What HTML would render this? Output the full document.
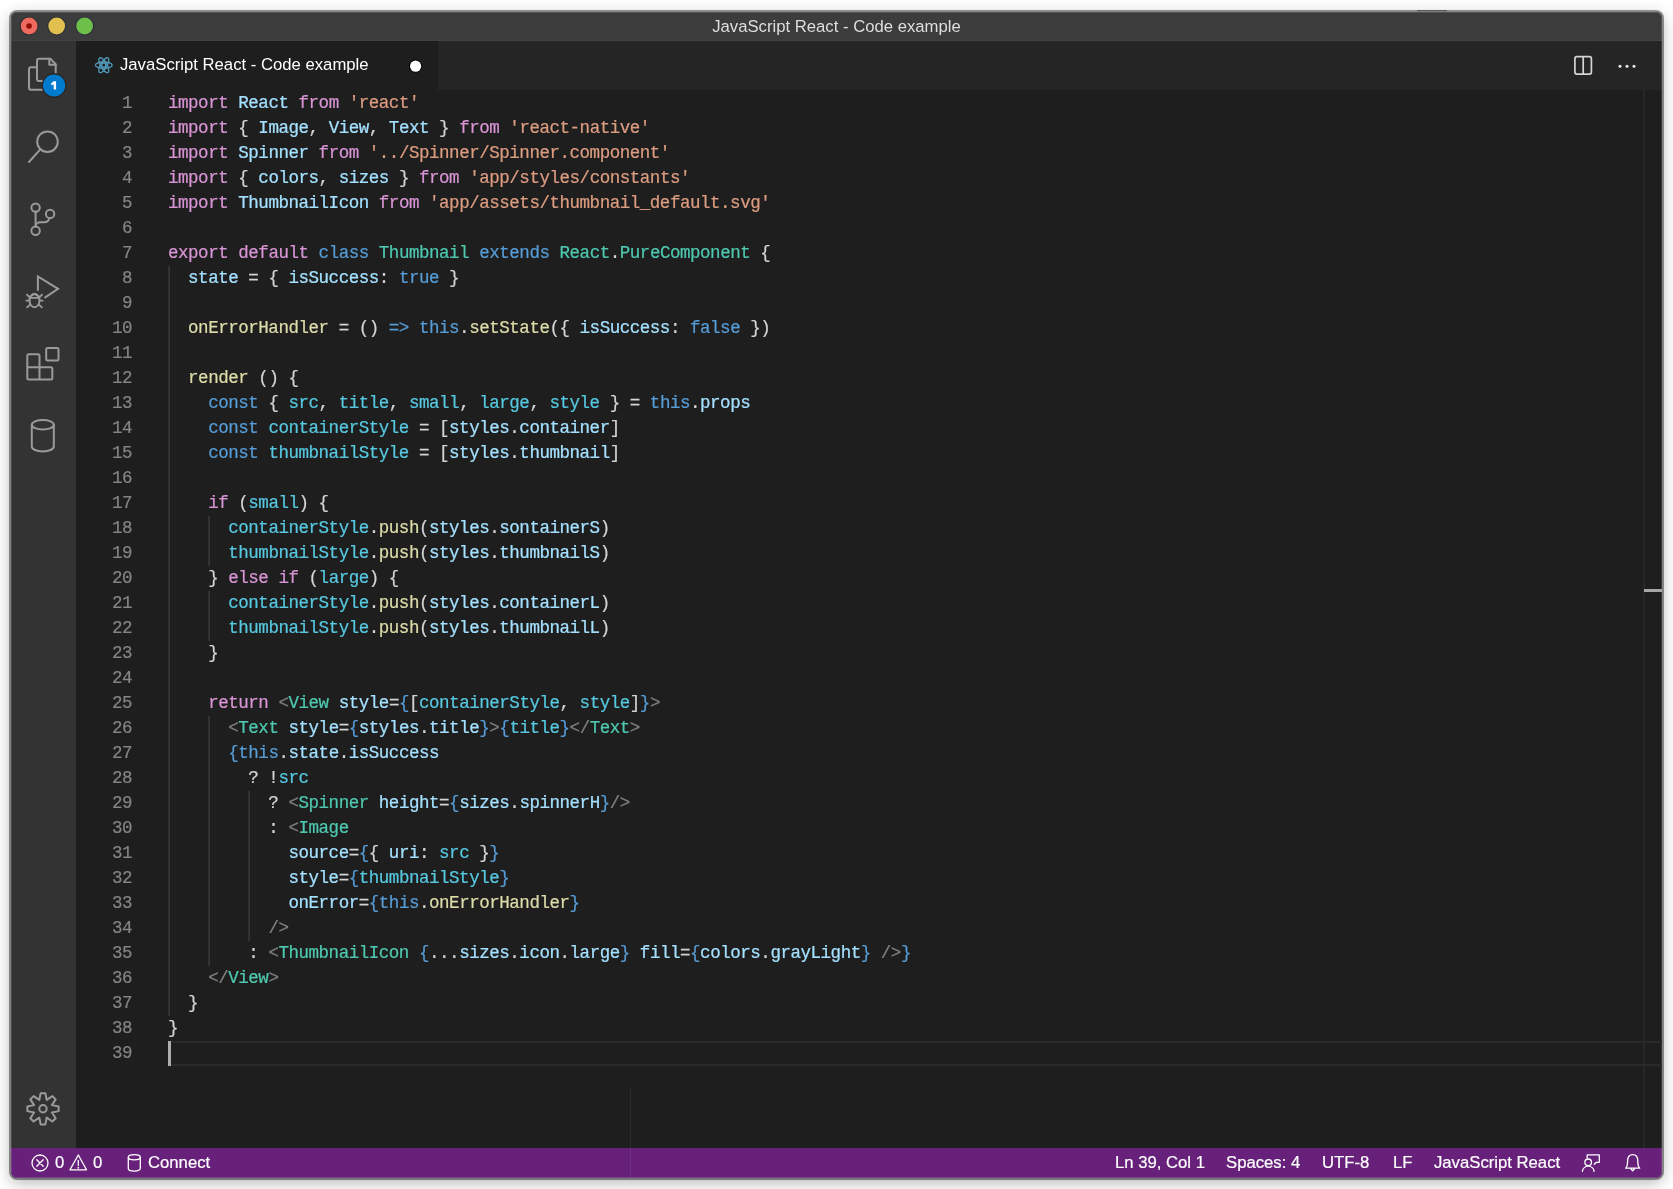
<!DOCTYPE html>
<html><head><meta charset="utf-8">
<style>
*{box-sizing:border-box}
html,body{margin:0;padding:0}
body{width:1673px;height:1189px;background:#ffffff;position:relative;overflow:hidden;font-family:"Liberation Sans",sans-serif}
#win{position:absolute;left:11px;top:12px;width:1651px;height:1166px;border-radius:6px;overflow:hidden;background:#1e1e1e;
 box-shadow:0 0 0 2px rgba(0,0,0,0.4),0 4px 16px rgba(0,0,0,0.32)}
#title{will-change:transform;position:absolute;left:0;top:0;width:1651px;height:29px;background:#3c3c3c;box-shadow:inset 0 -1px 0 #424242;color:#dedede;font-size:16.7px;text-align:center;line-height:29px}
.tl{position:absolute;top:5.5px;width:17px;height:17px;border-radius:50%}
#act{position:absolute;left:0;top:29px;width:65px;height:1107px;background:#333333}
#tabs{position:absolute;left:65px;top:29px;right:0;height:49px;background:#252526}
#tab{position:absolute;left:0;top:0;width:362px;height:49px;background:#1e1e1e}
#tabtxt{will-change:transform;position:absolute;left:44px;top:0;line-height:47px;font-size:16.7px;color:#ffffff;white-space:pre}
#editor{position:absolute;left:65px;top:78px;right:0;height:1059px;background:#1e1e1e}
#code{position:absolute;left:157px;top:78.5px;will-change:transform;-webkit-text-stroke:0.22px currentColor;font-family:"Liberation Mono",monospace;font-size:17.5px;letter-spacing:-0.465px;color:#d4d4d4}
.ln{position:absolute;left:0;height:25px;line-height:25px;white-space:pre}
#nums{will-change:transform;-webkit-text-stroke:0.2px currentColor;position:absolute;left:60px;top:79px;width:61px;font-family:"Liberation Mono",monospace;font-size:17.5px;letter-spacing:-0.5px;color:#858585}
.nu{position:absolute;right:0;height:25px;line-height:25px;white-space:pre}
.k{color:#d894d4}.s{color:#569cd6}.v{color:#a4e0ff}.c{color:#56c8e0}.t{color:#4ec9b0}.f{color:#dcdcaa}.r{color:#dc9c80}.g{color:#808080}
.guide{position:absolute;width:1px;background:#404040}
#status{will-change:transform;-webkit-text-stroke:0.2px #fff;position:absolute;left:0;top:1136px;width:1651px;height:30px;background:#68217a;color:#ffffff;font-size:16.7px}
.st{position:absolute;top:0;line-height:30px;white-space:pre}
svg{position:absolute;overflow:visible}
</style></head><body>
<div id="win">
 <div id="title">JavaScript React - Code example</div>
 <div class="tl" style="left:9.5px;background:#fe5f57"></div>
 <div class="tl" style="left:37px;background:#febc2e"></div>
 <div class="tl" style="left:65px;background:#28c840"></div>
 <div id="act"></div>
 <div id="tabs"><div id="tab"><div id="tabtxt">JavaScript React - Code example</div></div></div>
 <div id="editor"></div>
 <div id="nums">
<div class="nu" style="top:0px">1</div>
<div class="nu" style="top:25px">2</div>
<div class="nu" style="top:50px">3</div>
<div class="nu" style="top:75px">4</div>
<div class="nu" style="top:100px">5</div>
<div class="nu" style="top:125px">6</div>
<div class="nu" style="top:150px">7</div>
<div class="nu" style="top:175px">8</div>
<div class="nu" style="top:200px">9</div>
<div class="nu" style="top:225px">10</div>
<div class="nu" style="top:250px">11</div>
<div class="nu" style="top:275px">12</div>
<div class="nu" style="top:300px">13</div>
<div class="nu" style="top:325px">14</div>
<div class="nu" style="top:350px">15</div>
<div class="nu" style="top:375px">16</div>
<div class="nu" style="top:400px">17</div>
<div class="nu" style="top:425px">18</div>
<div class="nu" style="top:450px">19</div>
<div class="nu" style="top:475px">20</div>
<div class="nu" style="top:500px">21</div>
<div class="nu" style="top:525px">22</div>
<div class="nu" style="top:550px">23</div>
<div class="nu" style="top:575px">24</div>
<div class="nu" style="top:600px">25</div>
<div class="nu" style="top:625px">26</div>
<div class="nu" style="top:650px">27</div>
<div class="nu" style="top:675px">28</div>
<div class="nu" style="top:700px">29</div>
<div class="nu" style="top:725px">30</div>
<div class="nu" style="top:750px">31</div>
<div class="nu" style="top:775px">32</div>
<div class="nu" style="top:800px">33</div>
<div class="nu" style="top:825px">34</div>
<div class="nu" style="top:850px">35</div>
<div class="nu" style="top:875px">36</div>
<div class="nu" style="top:900px">37</div>
<div class="nu" style="top:925px">38</div>
<div class="nu" style="top:950px">39</div>
 </div>
 <div id="code">
<div class="ln" style="top:0px"><span class="k">import</span> <span class="v">React</span> <span class="k">from</span> <span class="r">'react'</span></div>
<div class="ln" style="top:25px"><span class="k">import</span> { <span class="v">Image</span>, <span class="v">View</span>, <span class="v">Text</span> } <span class="k">from</span> <span class="r">'react-native'</span></div>
<div class="ln" style="top:50px"><span class="k">import</span> <span class="v">Spinner</span> <span class="k">from</span> <span class="r">'../Spinner/Spinner.component'</span></div>
<div class="ln" style="top:75px"><span class="k">import</span> { <span class="v">colors</span>, <span class="v">sizes</span> } <span class="k">from</span> <span class="r">'app/styles/constants'</span></div>
<div class="ln" style="top:100px"><span class="k">import</span> <span class="v">ThumbnailIcon</span> <span class="k">from</span> <span class="r">'app/assets/thumbnail_default.svg'</span></div>
<div class="ln" style="top:125px"></div>
<div class="ln" style="top:150px"><span class="k">export</span> <span class="k">default</span> <span class="s">class</span> <span class="t">Thumbnail</span> <span class="s">extends</span> <span class="t">React</span>.<span class="t">PureComponent</span> {</div>
<div class="ln" style="top:175px">  <span class="v">state</span> = { <span class="v">isSuccess</span>: <span class="s">true</span> }</div>
<div class="ln" style="top:200px"></div>
<div class="ln" style="top:225px">  <span class="f">onErrorHandler</span> = () <span class="s">=&gt;</span> <span class="s">this</span>.<span class="f">setState</span>({ <span class="v">isSuccess</span>: <span class="s">false</span> })</div>
<div class="ln" style="top:250px"></div>
<div class="ln" style="top:275px">  <span class="f">render</span> () {</div>
<div class="ln" style="top:300px">    <span class="s">const</span> { <span class="c">src</span>, <span class="c">title</span>, <span class="c">small</span>, <span class="c">large</span>, <span class="c">style</span> } = <span class="s">this</span>.<span class="v">props</span></div>
<div class="ln" style="top:325px">    <span class="s">const</span> <span class="c">containerStyle</span> = [<span class="v">styles</span>.<span class="v">container</span>]</div>
<div class="ln" style="top:350px">    <span class="s">const</span> <span class="c">thumbnailStyle</span> = [<span class="v">styles</span>.<span class="v">thumbnail</span>]</div>
<div class="ln" style="top:375px"></div>
<div class="ln" style="top:400px">    <span class="k">if</span> (<span class="c">small</span>) {</div>
<div class="ln" style="top:425px">      <span class="c">containerStyle</span>.<span class="f">push</span>(<span class="v">styles</span>.<span class="v">sontainerS</span>)</div>
<div class="ln" style="top:450px">      <span class="c">thumbnailStyle</span>.<span class="f">push</span>(<span class="v">styles</span>.<span class="v">thumbnailS</span>)</div>
<div class="ln" style="top:475px">    } <span class="k">else</span> <span class="k">if</span> (<span class="c">large</span>) {</div>
<div class="ln" style="top:500px">      <span class="c">containerStyle</span>.<span class="f">push</span>(<span class="v">styles</span>.<span class="v">containerL</span>)</div>
<div class="ln" style="top:525px">      <span class="c">thumbnailStyle</span>.<span class="f">push</span>(<span class="v">styles</span>.<span class="v">thumbnailL</span>)</div>
<div class="ln" style="top:550px">    }</div>
<div class="ln" style="top:575px"></div>
<div class="ln" style="top:600px">    <span class="k">return</span> <span class="g">&lt;</span><span class="t">View</span> <span class="v">style</span>=<span class="s">{</span>[<span class="c">containerStyle</span>, <span class="c">style</span>]<span class="s">}</span><span class="g">&gt;</span></div>
<div class="ln" style="top:625px">      <span class="g">&lt;</span><span class="t">Text</span> <span class="v">style</span>=<span class="s">{</span><span class="v">styles</span>.<span class="v">title</span><span class="s">}</span><span class="g">&gt;</span><span class="s">{</span><span class="c">title</span><span class="s">}</span><span class="g">&lt;/</span><span class="t">Text</span><span class="g">&gt;</span></div>
<div class="ln" style="top:650px">      <span class="s">{</span><span class="s">this</span>.<span class="v">state</span>.<span class="v">isSuccess</span></div>
<div class="ln" style="top:675px">        ? !<span class="c">src</span></div>
<div class="ln" style="top:700px">          ? <span class="g">&lt;</span><span class="t">Spinner</span> <span class="v">height</span>=<span class="s">{</span><span class="v">sizes</span>.<span class="v">spinnerH</span><span class="s">}</span><span class="g">/&gt;</span></div>
<div class="ln" style="top:725px">          : <span class="g">&lt;</span><span class="t">Image</span></div>
<div class="ln" style="top:750px">            <span class="v">source</span>=<span class="s">{</span>{ <span class="v">uri</span>: <span class="c">src</span> }<span class="s">}</span></div>
<div class="ln" style="top:775px">            <span class="v">style</span>=<span class="s">{</span><span class="c">thumbnailStyle</span><span class="s">}</span></div>
<div class="ln" style="top:800px">            <span class="v">onError</span>=<span class="s">{</span><span class="s">this</span>.<span class="f">onErrorHandler</span><span class="s">}</span></div>
<div class="ln" style="top:825px">          <span class="g">/&gt;</span></div>
<div class="ln" style="top:850px">        : <span class="g">&lt;</span><span class="t">ThumbnailIcon</span> <span class="s">{</span>...<span class="v">sizes</span>.<span class="v">icon</span>.<span class="v">large</span><span class="s">}</span> <span class="v">fill</span>=<span class="s">{</span><span class="v">colors</span>.<span class="v">grayLight</span><span class="s">}</span> <span class="g">/&gt;</span><span class="s">}</span></div>
<div class="ln" style="top:875px">    <span class="g">&lt;/</span><span class="t">View</span><span class="g">&gt;</span></div>
<div class="ln" style="top:900px">  }</div>
<div class="ln" style="top:925px">}</div>
<div class="ln" style="top:950px"></div>
 </div>
 <div id="status">
  <div class="st" style="left:44px">0</div>
  <div class="st" style="left:82px">0</div>
  <div class="st" style="left:137px">Connect</div>
  <div class="st" style="left:1104px">Ln 39, Col 1</div>
  <div class="st" style="left:1215px">Spaces: 4</div>
  <div class="st" style="left:1311px">UTF-8</div>
  <div class="st" style="left:1382px">LF</div>
  <div class="st" style="left:1423px">JavaScript React</div>
 </div>
</div>

<div style="position:absolute;left:11px;top:12px;width:1651px;height:1166px;border-radius:6px;border:1px solid rgba(255,255,255,0.12)"></div>
<svg id="ov" width="1673" height="1189" style="left:0;top:0">
 <g fill="none" stroke="#9a9a9a" stroke-width="2" stroke-linejoin="round" stroke-linecap="round">
  <!-- files -->
  <path d="M37 74 V60.8 Q37 58.8 39 58.8 H50.3 L55.7 64.3 V78" />
  <path d="M49.3 58.8 V64.8 H55.7" />
  <path d="M37 67.2 H31 Q29 67.2 29 69.2 V87.7 Q29 89.7 31 89.7 H44" />
  <path d="M37 74 V79.1 Q37 81.1 39 81.1 H44" />
  <!-- search -->
  <circle cx="47.5" cy="141.7" r="10.3"/>
  <path d="M29 162 L39.8 149.9"/>
  <!-- scm -->
  <circle cx="35.6" cy="207.6" r="4.2"/>
  <circle cx="35.6" cy="230.7" r="4.2"/>
  <circle cx="50.1" cy="213.9" r="4.2"/>
  <path d="M35.6 211.8 V226.5"/>
  <path d="M49.6 218.1 C48.8 221.2 46.5 222.3 44 222.3 H40.5 C37.8 222.3 35.6 224 35.6 226.5"/>
  <!-- debug -->
  <path d="M37.9 289.9 V276.5 L58.1 288.8 L45.2 297.4" stroke-linejoin="miter"/>
  <ellipse cx="34.5" cy="300.6" rx="5" ry="6.6"/>
  <path d="M29.5 297.8 H39.5 M31.5 295.8 Q34.5 292.2 37.5 295.8 M26.9 294.7 L29.6 297 M26.3 300.6 H29.3 M27.1 307.3 L29.7 305 M42.1 294.7 L39.4 297 M42.7 300.6 H39.7 M41.9 307.3 L39.3 305" stroke-width="1.8"/>
  <!-- extensions -->
  <rect x="46.2" y="348" width="12.3" height="12.5" rx="1.5"/>
  <path d="M27.3 355.8 Q27.3 354.3 28.8 354.3 H38 Q39.5 354.3 39.5 355.8 V367.2 H50.8 Q52.3 367.2 52.3 368.7 V377.9 Q52.3 379.4 50.8 379.4 H28.8 Q27.3 379.4 27.3 377.9 Z M27.3 367.2 H39.5 V379.4"/>
  <!-- db -->
  <ellipse cx="42.8" cy="424.8" rx="11" ry="4.8"/>
  <path d="M31.8 424.8 V446.6 A11 4.8 0 0 0 53.8 446.6 V424.8"/>
  <!-- gear -->
  <path d="M40.66 1093.17 L45.34 1093.17 L46.67 1099.93 L52.40 1096.10 L55.70 1099.40 L51.87 1105.13 L58.63 1106.46 L58.63 1111.14 L51.87 1112.47 L55.70 1118.20 L52.40 1121.50 L46.67 1117.67 L45.34 1124.43 L40.66 1124.43 L39.33 1117.67 L33.60 1121.50 L30.30 1118.20 L34.13 1112.47 L27.37 1111.14 L27.37 1106.46 L34.13 1105.13 L30.30 1099.40 L33.60 1096.10 L39.33 1099.93Z"/>
  <circle cx="43" cy="1108.8" r="3.7"/>
 </g>
 <!-- badge -->
 <circle cx="54.1" cy="85.5" r="12.4" fill="#2a2624"/>
 <circle cx="54.1" cy="85.5" r="11.1" fill="#007acc"/>
 <path d="M53.7 81.2 H56.1 V89.6 H53.7 V84.3 L51.3 85.5 V83.3 Z" fill="#ffffff"/>
 <!-- traffic lights -->
 <circle cx="29.1" cy="26" r="9.3" fill="#23292b"/>
 <circle cx="29.1" cy="26" r="8.4" fill="#ee6a5e"/>
 <circle cx="29.1" cy="26" r="2.8" fill="#8d0e05"/>
 <circle cx="56.7" cy="26" r="9.3" fill="#26283a"/>
 <circle cx="56.7" cy="26" r="8.4" fill="#e2c04f"/>
 <circle cx="84.6" cy="26" r="9.3" fill="#2a2440"/>
 <circle cx="84.6" cy="26" r="8.4" fill="#6cc04a"/>
 <!-- react icon -->
 <g fill="none" stroke="#519aba" stroke-width="1.3">
  <ellipse cx="103.8" cy="65.2" rx="8.4" ry="3.2"/>
  <ellipse cx="103.8" cy="65.2" rx="8.4" ry="3.2" transform="rotate(60 103.8 65.2)"/>
  <ellipse cx="103.8" cy="65.2" rx="8.4" ry="3.2" transform="rotate(120 103.8 65.2)"/>
  <circle cx="103.8" cy="65.2" r="2" fill="#1e1e1e"/>
 </g>
 <!-- dirty dot -->
 <circle cx="415.6" cy="66.2" r="6.6" fill="#000000" opacity="0.9"/>
 <circle cx="415.6" cy="66.2" r="5.6" fill="#ffffff"/>
 <!-- editor actions -->
 <rect x="1574.9" y="56.7" width="16.5" height="17.4" rx="2" fill="none" stroke="#d4d4d4" stroke-width="1.7"/>
 <path d="M1583.2 56.7 V74.1" stroke="#d4d4d4" stroke-width="1.7"/>
 <circle cx="1620" cy="66.2" r="1.5" fill="#e8e8e8"/>
 <circle cx="1627" cy="66.2" r="1.5" fill="#e8e8e8"/>
 <circle cx="1634" cy="66.2" r="1.5" fill="#e8e8e8"/>
 <!-- guides -->
 <g fill="#404040">
  <rect x="168.5" y="266" width="1.2" height="750"/>
  <rect x="208.5" y="516" width="1.2" height="50"/>
  <rect x="208.5" y="591" width="1.2" height="50"/>
  <rect x="208.5" y="716" width="1.2" height="250"/>
  <rect x="248.5" y="791" width="1.2" height="150"/>
 </g>
 <!-- current line -->
 <rect x="168" y="1041" width="1494" height="2" fill="#292929"/>
 <rect x="168" y="1064" width="1494" height="2" fill="#292929"/>
 <rect x="168" y="1041" width="3" height="25" fill="#aeafad"/>
 <!-- ruler & overview -->
 <rect x="1643.5" y="89" width="1.5" height="1059" fill="#2a2a2a"/>
 <rect x="1644" y="589" width="18" height="3" fill="#a6a6a6"/>
 <rect x="630" y="1089" width="1" height="89" fill="#ffffff" opacity="0.06"/>
 <rect x="1417" y="10" width="30" height="1.2" fill="#555555"/>
 <!-- status icons -->
 <g fill="none" stroke="#ffffff" stroke-width="1.3" stroke-linecap="round" stroke-linejoin="round">
  <circle cx="40" cy="1163" r="8"/>
  <path d="M36.8 1159.8 L43.2 1166.2 M43.2 1159.8 L36.8 1166.2"/>
  <path d="M78.3 1155 L86.5 1169.8 H70 Z"/>
  <path d="M78.3 1160.5 V1165.5"/>
  <ellipse cx="134.3" cy="1157.3" rx="6" ry="2.6"/>
  <path d="M128.3 1157.3 V1168.6 A6 2.6 0 0 0 140.3 1168.6 V1157.3"/>
  <circle cx="1588.2" cy="1162.3" r="3.3"/>
  <path d="M1582.4 1171.3 A5.9 5.9 0 0 1 1594.1 1171.3"/>
  <path d="M1587.2 1158 V1154.9 H1599.3 V1162.3 H1596.3 L1594.3 1164.3"/>
  <path d="M1625.7 1168.2 C1627.3 1166.5 1627.6 1164 1627.6 1161 C1627.6 1157 1629.8 1154.6 1632.7 1154.6 C1635.6 1154.6 1637.8 1157 1637.8 1161 C1637.8 1164 1638.1 1166.5 1639.7 1168.2 Z M1631 1169 L1632.7 1170.8 L1634.4 1169"/>
 </g>
 <circle cx="78.3" cy="1167.8" r="0.9" fill="#ffffff"/>
</svg>

</body></html>
